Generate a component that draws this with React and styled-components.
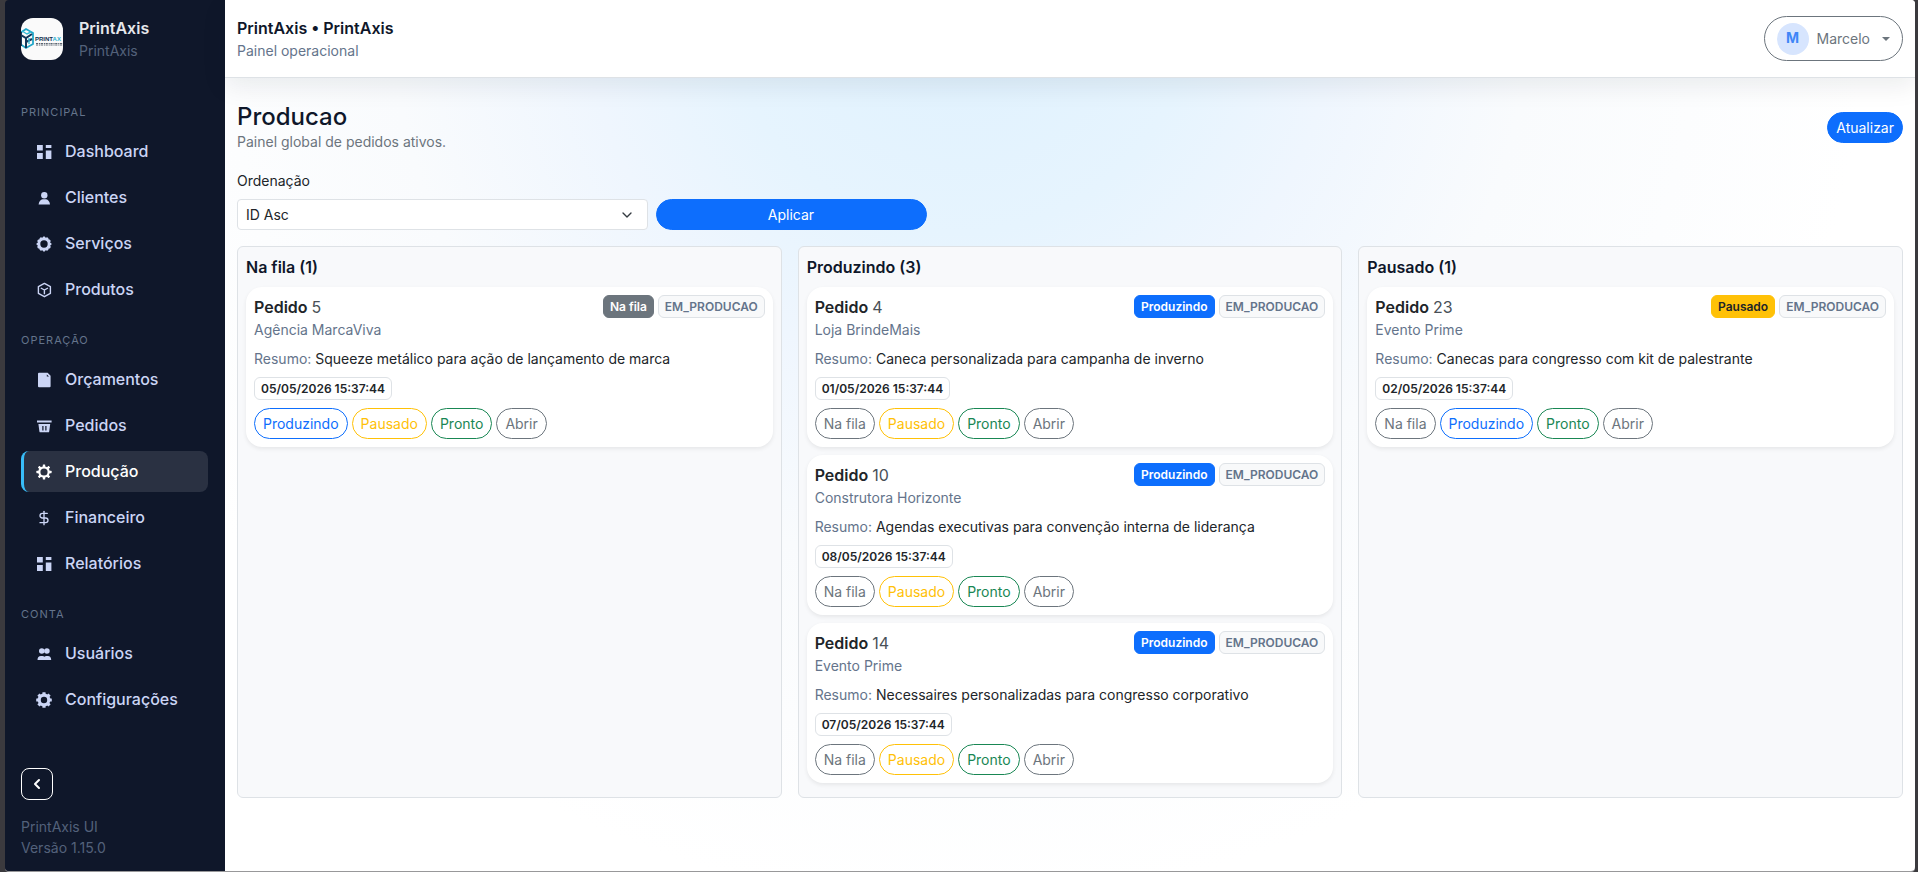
import React from 'react'
import styled, { createGlobalStyle, css, ThemeProvider } from 'styled-components'
import { ChevronDown, ChevronLeft, DollarSign } from 'lucide-react'

const theme = {
  colors: {
    navy: '#0f172a',
    ink: '#0f172a',
    text: '#212529',
    slate: '#64748b',
    gray: '#6c757d',
    line: '#dee2e6',
    panel: '#f8f9fb',
    blue: '#0d6efd',
    yellow: '#ffc107',
    green: '#198754',
    sky: '#38bdf8',
    nav: '#cbd5f5',
    white: '#ffffff',
  },
}

const GlobalStyle = createGlobalStyle`
  *, *::before, *::after { box-sizing: border-box; }
  body {
    margin: 0;
    background: #3b3a3e;
    color: ${theme.colors.text};
    font-family: Inter, 'Liberation Sans', sans-serif;
    font-size: 14px;
    line-height: 21px;
  }
  h1, h2, h3, p, ul { margin: 0; padding: 0; }
  ul { list-style: none; }
  button, select { font: inherit; }
`

const Frame = styled.div`
  min-height: 100vh;
  display: flex;
  padding: 0 3px 1px 5px;
`

const Shell = styled.div`
  flex: 1;
  display: grid;
  grid-template-columns: 220px minmax(0, 1fr);
  border-radius: 4px;
  overflow: hidden;
  box-shadow: 0 1px 0 #98989a;
`

/* sidebar */

const Sidebar = styled.aside`
  display: flex;
  flex-direction: column;
  padding: 16px 17px 13px 16px;
  background: ${({ theme }) => theme.colors.navy};
`

const Brand = styled.div`
  display: flex;
  align-items: center;
  gap: 16px;
  margin-bottom: 21px;
`

const Logo = styled.svg`
  width: 42px;
  height: 42px;
  border-radius: 12px;
  background: #fafafa;
`

const BrandName = styled.p`
  font-size: 16px;
  font-weight: 600;
  line-height: 24px;
  color: #e5e7eb;
`

const BrandSub = styled.p`
  color: #53617a;
`

const NavSection = styled.section`
  margin-top: 21px;
`

const NavLabel = styled.h2`
  margin-bottom: 10px;
  font-size: 11px;
  font-weight: 400;
  line-height: 18px;
  letter-spacing: 1px;
  text-transform: uppercase;
  color: ${({ theme }) => theme.colors.slate};
`

const NavList = styled.ul`
  display: grid;
  gap: 5px;
`

const NavLink = styled.a`
  display: flex;
  align-items: center;
  gap: 13px;
  height: 41px;
  padding: 0 12px;
  border-left: 3px solid transparent;
  border-radius: 8px;
  font-size: 16px;
  font-weight: 500;
  text-decoration: none;
  color: ${({ theme }) => theme.colors.nav};

  svg {
    flex: none;
    width: 16px;
    height: 16px;
  }

  ${({ $active, theme }) => $active && css`
    color: ${theme.colors.white};
    background: #2a3142;
    border-left-color: ${theme.colors.sky};
  `}
`

const SidebarFooter = styled.footer`
  margin-top: auto;
  color: #53617a;
`

const CollapseButton = styled.button`
  display: flex;
  align-items: center;
  justify-content: center;
  width: 32px;
  height: 32px;
  margin-bottom: 16px;
  padding: 0;
  border: 1px solid ${({ theme }) => theme.colors.white};
  border-radius: 8px;
  background: transparent;
  color: ${({ theme }) => theme.colors.white};
  cursor: pointer;
`

/* main area */

const Content = styled.div`
  background: radial-gradient(circle at top, #dff1fe 0%, #e6f4fe 18%, #eff6fe 29%, #f9fbfd 44%, #fff 70%);
  background-position: -220px 0;
  background-size: calc(100% + 220px) 100%;
`

const Topbar = styled.header`
  display: flex;
  align-items: center;
  justify-content: space-between;
  height: 78px;
  padding: 0 12px;
  border-bottom: 1px solid ${({ theme }) => theme.colors.line};
  background: ${({ theme }) => theme.colors.white};
  box-shadow: 0 8px 24px rgba(15, 23, 42, 0.08);
`

const TopTitle = styled.p`
  font-size: 16px;
  font-weight: 600;
  line-height: 24px;
  color: ${({ theme }) => theme.colors.ink};
`

const Muted = styled.p`
  color: ${({ theme, $cool }) => ($cool ? theme.colors.slate : theme.colors.gray)};
`

const UserButton = styled.button`
  display: flex;
  align-items: center;
  gap: 8px;
  height: 45px;
  padding: 0 12px;
  border: 1px solid ${({ theme }) => theme.colors.gray};
  border-radius: 999px;
  background: transparent;
  color: ${({ theme }) => theme.colors.gray};
  cursor: pointer;
`

const Avatar = styled.span`
  width: 32px;
  height: 32px;
  border-radius: 50%;
  background: #d7e5fe;
  color: #3f86f7;
  font-weight: 700;
  line-height: 30px;
  text-align: center;
`

const Caret = styled.span`
  margin-left: 4px;
  border-top: 4px solid currentColor;
  border-left: 4px solid transparent;
  border-right: 4px solid transparent;
`

const Main = styled.main`
  padding: 24px 12px;
`

const PageHead = styled.div`
  display: flex;
  align-items: center;
  justify-content: space-between;
  margin-bottom: 18px;
`

const PageTitle = styled.h1`
  font-size: 24px;
  font-weight: 500;
  line-height: 29px;
  color: ${({ theme }) => theme.colors.ink};
`

const Button = styled.button`
  height: 31px;
  padding: 0 8px;
  border: 1px solid ${({ theme }) => theme.colors.blue};
  border-radius: 999px;
  background: ${({ theme }) => theme.colors.blue};
  color: ${({ theme }) => theme.colors.white};
  cursor: pointer;
`

const OutlineButton = styled(Button)`
  background: transparent;
  border-color: ${({ theme, $tone }) => theme.colors[$tone]};
  color: ${({ theme, $tone }) => theme.colors[$tone]};
`

const Filters = styled.form`
  display: grid;
  grid-template-columns: repeat(12, minmax(0, 1fr));
  align-items: end;
  gap: 8px;
  margin-bottom: 16px;
`

const Field = styled.div`
  grid-column: span 3;
`

const ApplyButton = styled(Button)`
  grid-column: span 2;
`

const Label = styled.label`
  display: block;
  margin-bottom: 8px;
`

const SelectWrap = styled.div`
  position: relative;

  svg {
    position: absolute;
    top: 8px;
    right: 13px;
    pointer-events: none;
  }
`

const Select = styled.select`
  display: block;
  width: 100%;
  height: 31px;
  padding: 0 8px;
  border: 1px solid ${({ theme }) => theme.colors.line};
  border-radius: 4px;
  background: ${({ theme }) => theme.colors.white};
  color: ${({ theme }) => theme.colors.text};
  appearance: none;
`

const Board = styled.div`
  display: grid;
  grid-template-columns: repeat(3, minmax(0, 1fr));
  gap: 16px;
`

const Column = styled.section`
  padding: 8px 8px 14px;
  border: 1px solid ${({ theme }) => theme.colors.line};
  border-radius: 6px;
  background: ${({ theme }) => theme.colors.panel};
`

const ColumnTitle = styled.h2`
  margin-bottom: 8px;
  font-size: 16px;
  font-weight: 600;
  line-height: 24px;
  color: ${({ theme }) => theme.colors.ink};
`

const Cards = styled.div`
  display: grid;
  gap: 8px;
`

const Card = styled.article`
  padding: 8px;
  border-radius: 16px;
  background: ${({ theme }) => theme.colors.white};
  box-shadow: 0 2px 4px rgba(0, 0, 0, 0.075);
`

const CardHead = styled.div`
  display: flex;
  align-items: flex-start;
  justify-content: space-between;
  margin-bottom: 8px;
`

const CardTitle = styled.h3`
  font-size: 16px;
  font-weight: 600;
  line-height: 24px;

  span {
    font-weight: 400;
    color: #495057;
  }
`

const Badges = styled.div`
  display: flex;
  gap: 4px;
`

const badgeTones = {
  gray: css`background: #6c757d; border-color: #6c757d; color: #fff;`,
  blue: css`background: #0d6efd; border-color: #0d6efd; color: #fff;`,
  yellow: css`background: #ffc107; border-color: #ffc107; color: #212529;`,
  stage: css`background: #f8f9fa; color: #64748b;`,
}

const Badge = styled.span`
  display: inline-block;
  padding: 0 6px;
  border: 1px solid ${({ theme }) => theme.colors.line};
  border-radius: 6px;
  font-size: 12px;
  font-weight: 600;
  line-height: 21px;
  ${({ $tone }) => badgeTones[$tone]}
`

const Summary = styled.p`
  margin-bottom: 8px;

  span {
    color: ${({ theme }) => theme.colors.slate};
  }
`

const DateRow = styled.div`
  display: flex;
  margin-bottom: 8px;
`

const Actions = styled.div`
  display: flex;
  flex-wrap: wrap;
  gap: 4px;
`

/* icons */

const TilesIcon = () => (
  <svg viewBox="0 0 16 16" fill="currentColor" aria-hidden="true">
    <path d="M1 1h5.800v5.500H1zM1 9h5.800v6H1zM9.800 1h5.600v3H9.800zM9.800 6.500h5.600V15H9.800z" />
  </svg>
)

const UserIcon = () => (
  <svg viewBox="0 0 16 16" fill="currentColor" aria-hidden="true">
    <circle cx="8.3" cy="5.2" r="3.2" />
    <path d="M2.6 14.6c.2-3 1.9-5 4-5.3h3.4c2.1.3 3.8 2.3 4 5.3z" />
  </svg>
)

const UsersIcon = () => (
  <svg viewBox="0 0 16 16" fill="currentColor" aria-hidden="true">
    <circle cx="5.8" cy="5" r="2.8" />
    <circle cx="10.9" cy="5" r="2.8" />
    <path d="M1.5 14c0-2.6 1.3-4 3.4-4h1.6c.8 0 1.4.3 1.9.8.5-.5 1.1-.8 1.9-.8h1.6c2 0 3.3 1.4 3.3 4z" />
  </svg>
)

const BoxIcon = () => (
  <svg viewBox="0 0 16 16" fill="none" stroke="currentColor" strokeWidth="1.4" strokeLinejoin="round" aria-hidden="true">
    <path d="M8.4 1.400 14.4 4.700v6.700l-6 3.300-6-3.300V4.700z" />
    <path d="m4.800 6 3.600 2L12 6M8.400 8v4.200" />
  </svg>
)

const DocIcon = () => (
  <svg viewBox="0 0 16 16" fill="currentColor" fillRule="evenodd" aria-hidden="true">
    <path d="M3 .8h8.600l3 3v10.400a1 1 0 0 1-1 1H3a1 1 0 0 1-1-1V1.800a1 1 0 0 1 1-1zM10.800 2.400v2.200H13z" />
  </svg>
)

const BasketIcon = () => (
  <svg viewBox="0 0 16 16" fill="currentColor" fillRule="evenodd" aria-hidden="true">
    <path d="M1 2.500h14.600v2H1z" />
    <path d="M2.400 6h11.800l-1 7.400a1 1 0 0 1-1 .9H4.400a1 1 0 0 1-1-.9zM6.300 8v4.500h1.200V8zM9.300 8v4.500h1.200V8z" />
  </svg>
)

const Gear = ({ teeth, tooth, radius, ring, reach = 7.6 }) => (
  <svg viewBox="0 0 16 16" fill="currentColor" aria-hidden="true">
    <circle cx="8" cy="8" r={radius} fill="none" stroke="currentColor" strokeWidth={ring} />
    {Array.from({ length: teeth }, (_, i) => (
      <rect
        key={i}
        x={8 - tooth / 2}
        y={8 - reach}
        width={tooth}
        height={reach - radius}
        rx="0.4"
        transform={`rotate(${(360 / teeth) * i} 8 8)`}
      />
    ))}
  </svg>
)

const ServiceIcon = () => <Gear teeth={12} tooth={2.2} radius={5.2} ring={3} reach={7.4} />
const ProductionIcon = () => <Gear teeth={8} tooth={2.4} radius={4.7} ring={2.2} />
const SettingsIcon = () => <Gear teeth={8} tooth={3.2} radius={4.8} ring={3.2} reach={7.8} />

const BrandLogo = () => (
  <Logo viewBox="0 0 42 42" role="img" aria-label="PrintAxis">
    <path d="M-1 15 5 11l7 4v11l-7 4-6-4" fill="none" stroke="#22a7c9" strokeWidth="1.8" />
    <path d="M0 14v14M5 19v11M0 17l5 3 6-4M5 24l6-3" fill="none" stroke="#12395c" strokeWidth="2" />
    <path d="m1 13 5 3 4-2M8 20v6" fill="none" stroke="#35bcd8" strokeWidth="1.4" />
    <text x="14" y="23" fontFamily="Liberation Sans, sans-serif" fontSize="6" fontWeight="700" fill="#12304d">
      PRINT<tspan fill="#2bb1cf">AX</tspan>
    </text>
    <path d="M15 25.500h27M15 27h27" stroke="#5b6470" strokeWidth="1.200" strokeDasharray="2.200 .8 1.200 .6" />
  </Logo>
)

const menu = [
  {
    label: 'Principal',
    items: [
      { name: 'Dashboard', icon: TilesIcon },
      { name: 'Clientes', icon: UserIcon },
      { name: 'Serviços', icon: ServiceIcon },
      { name: 'Produtos', icon: BoxIcon },
    ],
  },
  {
    label: 'Operação',
    items: [
      { name: 'Orçamentos', icon: DocIcon },
      { name: 'Pedidos', icon: BasketIcon },
      { name: 'Produção', icon: ProductionIcon, active: true },
      { name: 'Financeiro', icon: DollarSign },
      { name: 'Relatórios', icon: TilesIcon },
    ],
  },
  {
    label: 'Conta',
    items: [
      { name: 'Usuários', icon: UsersIcon },
      { name: 'Configurações', icon: SettingsIcon },
    ],
  },
]

const statuses = [
  { name: 'Na fila', tone: 'gray' },
  { name: 'Produzindo', tone: 'blue' },
  { name: 'Pausado', tone: 'yellow' },
  { name: 'Pronto', tone: 'green' },
]

const board = [
  {
    status: 'Na fila',
    orders: [
      { id: 5, client: 'Agência MarcaViva', summary: 'Squeeze metálico para ação de lançamento de marca', date: '05/05/2026 15:37:44' },
    ],
  },
  {
    status: 'Produzindo',
    orders: [
      { id: 4, client: 'Loja BrindeMais', summary: 'Caneca personalizada para campanha de inverno', date: '01/05/2026 15:37:44' },
      { id: 10, client: 'Construtora Horizonte', summary: 'Agendas executivas para convenção interna de liderança', date: '08/05/2026 15:37:44' },
      { id: 14, client: 'Evento Prime', summary: 'Necessaires personalizadas para congresso corporativo', date: '07/05/2026 15:37:44' },
    ],
  },
  {
    status: 'Pausado',
    orders: [
      { id: 23, client: 'Evento Prime', summary: 'Canecas para congresso com kit de palestrante', date: '02/05/2026 15:37:44' },
    ],
  },
]

const OrderCard = ({ order, status }) => (
  <Card>
    <CardHead>
      <div>
        <CardTitle>Pedido <span>{order.id}</span></CardTitle>
        <Muted $cool>{order.client}</Muted>
      </div>
      <Badges>
        <Badge $tone={statuses.find((s) => s.name === status).tone}>{status}</Badge>
        <Badge $tone="stage">EM_PRODUCAO</Badge>
      </Badges>
    </CardHead>
    <Summary><span>Resumo:</span> {order.summary}</Summary>
    <DateRow>
      <Badge>{order.date}</Badge>
    </DateRow>
    <Actions>
      {statuses.filter((s) => s.name !== status).map((s) => (
        <OutlineButton key={s.name} type="button" $tone={s.tone}>{s.name}</OutlineButton>
      ))}
      <OutlineButton type="button" $tone="gray">Abrir</OutlineButton>
    </Actions>
  </Card>
)

export default () => (
  <ThemeProvider theme={theme}>
    <GlobalStyle />
    <Frame>
      <Shell>
        <Sidebar>
          <Brand>
            <BrandLogo />
            <div>
              <BrandName>PrintAxis</BrandName>
              <BrandSub>PrintAxis</BrandSub>
            </div>
          </Brand>
          <nav>
            {menu.map((section) => (
              <NavSection key={section.label}>
                <NavLabel>{section.label}</NavLabel>
                <NavList>
                  {section.items.map(({ name, icon: Icon, active }) => (
                    <li key={name}>
                      <NavLink href="#" $active={active}>
                        <Icon />
                        {name}
                      </NavLink>
                    </li>
                  ))}
                </NavList>
              </NavSection>
            ))}
          </nav>
          <SidebarFooter>
            <CollapseButton type="button" aria-label="Recolher menu">
              <ChevronLeft size={16} strokeWidth={3} />
            </CollapseButton>
            <p>PrintAxis UI</p>
            <p>Versão 1.15.0</p>
          </SidebarFooter>
        </Sidebar>
        <Content>
          <Topbar>
            <div>
              <TopTitle>PrintAxis • PrintAxis</TopTitle>
              <Muted $cool>Painel operacional</Muted>
            </div>
            <UserButton type="button">
              <Avatar>M</Avatar>
              Marcelo
              <Caret />
            </UserButton>
          </Topbar>
          <Main>
            <PageHead>
              <div>
                <PageTitle>Producao</PageTitle>
                <Muted>Painel global de pedidos ativos.</Muted>
              </div>
              <Button type="button">Atualizar</Button>
            </PageHead>
            <Filters>
              <Field>
                <Label htmlFor="order">Ordenação</Label>
                <SelectWrap>
                  <Select id="order" defaultValue="asc">
                    <option value="asc">ID Asc</option>
                    <option value="desc">ID Desc</option>
                  </Select>
                  <ChevronDown size={16} strokeWidth={2} color="#343a40" />
                </SelectWrap>
              </Field>
              <ApplyButton type="button">Aplicar</ApplyButton>
            </Filters>
            <Board>
              {board.map(({ status, orders }) => (
                <Column key={status}>
                  <ColumnTitle>{status} ({orders.length})</ColumnTitle>
                  <Cards>
                    {orders.map((order) => (
                      <OrderCard key={order.id} order={order} status={status} />
                    ))}
                  </Cards>
                </Column>
              ))}
            </Board>
          </Main>
        </Content>
      </Shell>
    </Frame>
  </ThemeProvider>
)
